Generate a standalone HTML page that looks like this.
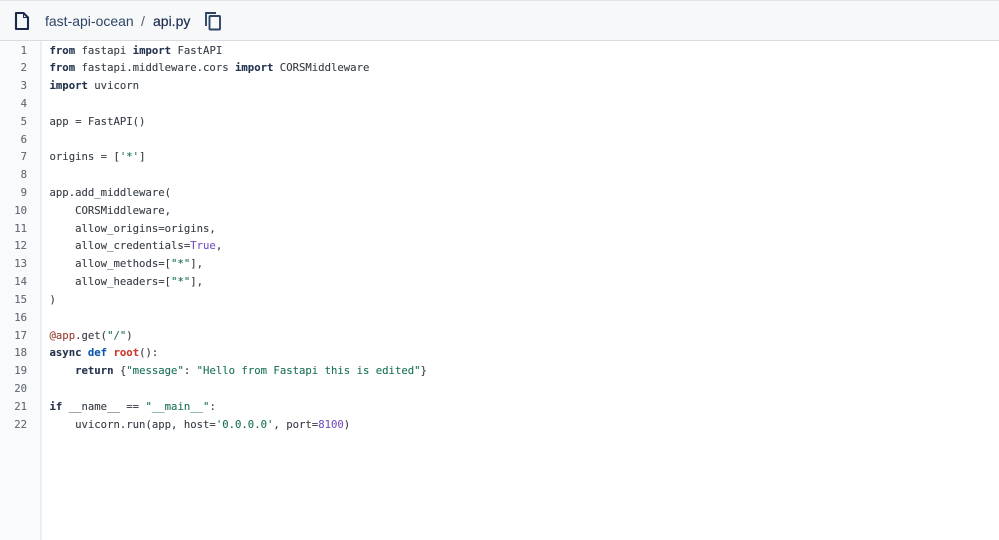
<!DOCTYPE html>
<html><head><meta charset="utf-8"><style>
html,body{margin:0;padding:0;width:999px;height:540px;overflow:hidden;background:#fff}
#hdr{position:absolute;left:0;top:0;width:999px;height:41px;background:#f6f8fa;border-top:1px solid #e4e7ea;border-bottom:1px solid #d8dce1;box-sizing:border-box}
#gut{position:absolute;left:0;top:41px;width:42px;height:499px;background:#f9fafc;border-right:2px solid #eceef1;box-sizing:border-box}
.t{position:absolute;font-family:"Liberation Sans",sans-serif;font-size:14px;line-height:20px;white-space:pre;filter:blur(.25px)}
.n,.c{position:absolute;font-family:"DejaVu Sans Mono",monospace;font-size:10.63px;line-height:17.81px;white-space:pre;filter:blur(.3px);-webkit-text-stroke:.1px currentColor}
.n{left:0;width:27px;text-align:right;color:#5f6872}
.c{left:49.5px;color:#363c44}
.k{color:#24344f;font-weight:bold}.b{color:#0f58b0;font-weight:bold}.s{color:#1a7058}.p{color:#7450c0}.r{color:#cf3a2e;font-weight:bold}.d{color:#953f30}
svg{position:absolute}
</style></head><body>
<div id="hdr"></div><div id="gut"></div>
<svg style="left:14px;top:11px" width="16" height="20" viewBox="0 0 16 20" fill="none" stroke="#1c2b4a" stroke-width="2.1" stroke-linejoin="round"><path d="M2 2H9.5L14 6.5V18H2Z"/><path d="M9.5 2V6.5H14" stroke-width="1"/></svg>
<svg style="left:204px;top:11px" width="18" height="20" viewBox="0 0 18 20" fill="none" stroke="#2d4468" stroke-width="1.9"><path d="M2 15V2H12"/><rect x="5.5" y="5" width="10.5" height="13.5" rx=".8"/></svg>
<div class="t" style="left:45px;top:11px;color:#2f4566">fast-api-ocean</div>
<div class="t" style="left:141px;top:11px;color:#57606a">/</div>
<div class="t" style="left:153px;top:11px;color:#1f2f4f;-webkit-text-stroke:.2px #1f2f4f">api.py</div>
<div class="n" style="top:41.5px">1
2
3
4
5
6
7
8
9
10
11
12
13
14
15
16
17
18
19
20
21
22</div>
<div class="c" style="top:41.5px"><span class="k">from</span> fastapi <span class="k">import</span> FastAPI
<span class="k">from</span> fastapi.middleware.cors <span class="k">import</span> CORSMiddleware
<span class="k">import</span> uvicorn

app = FastAPI()

origins = [<span class="s">'*'</span>]

app.add_middleware(
    CORSMiddleware,
    allow_origins=origins,
    allow_credentials=<span class="p">True</span>,
    allow_methods=[<span class="s">"*"</span>],
    allow_headers=[<span class="s">"*"</span>],
)

<span class="d">@app</span>.get(<span class="s">"/"</span>)
<span class="k">async</span> <span class="b">def</span> <span class="r">root</span>():
    <span class="k">return</span> {<span class="s">"message"</span>: <span class="s">"Hello from Fastapi this is edited"</span>}

<span class="k">if</span> __name__ == <span class="s">"__main__"</span>:
    uvicorn.run(app, host=<span class="s">'0.0.0.0'</span>, port=<span class="p">8100</span>)</div>
</body></html>
